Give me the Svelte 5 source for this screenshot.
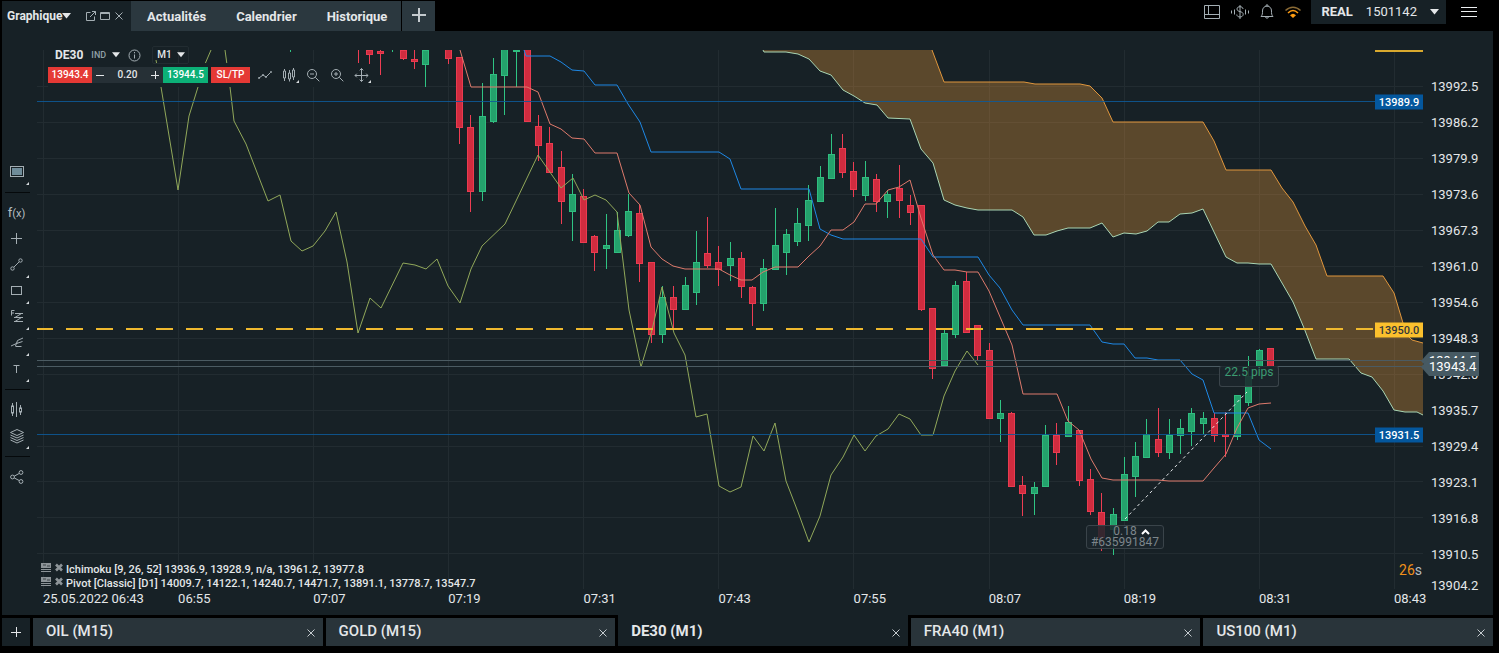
<script lang="ts">
  type Candle = [number, number, number, number, number, "up" | "down"];

  const plot = { x: 37, y: 50, width: 1386, height: 539 };

  let volume = $state("0.20");
  let period = $state("M1");
  let activeChart = $state("DE30 (M1)");

  const pages = ["Actualités", "Calendrier", "Historique"];
  const charts = ["OIL (M15)", "GOLD (M15)", "DE30 (M1)", "FRA40 (M1)", "US100 (M1)"];

  const prices = [
    "13992.5", "13986.2", "13979.9", "13973.6", "13967.3", "13961.0", "13954.6", "13948.3",
    "13942.0", "13935.7", "13929.4", "13923.1", "13916.8", "13910.5", "13904.2",
  ];
  const times = [
    "25.05.2022 06:43", "06:55", "07:07", "07:19", "07:31", "07:43",
    "07:55", "08:07", "08:19", "08:31", "08:43",
  ];
  const indicators = [
    "Ichimoku [9, 26, 52] 13936.9, 13928.9, n/a, 13961.2, 13977.8",
    "Pivot [Classic] [D1] 14009.7, 14122.1, 14240.7, 14471.7, 13891.1, 13778.7, 13547.7",
  ];

  const tools = [
    { name: "screen", menu: true },
    { name: "sep" },
    { name: "fx" },
    { name: "cross" },
    { name: "line", menu: true },
    { name: "rect", menu: true },
    { name: "fibo", menu: true },
    { name: "fork", menu: true },
    { name: "text", menu: true },
    { name: "sep" },
    { name: "bars" },
    { name: "layers", menu: true },
    { name: "sep" },
    { name: "share" },
  ];

  // minute offset from 07:19, high, body top, body bottom, low
  const candles: Candle[] = [
    [-14, 50, 50, 50, 52, "up"],
    [-8, 50, 50, 50, 64, "down"],
    [-7, 50, 50, 55, 64, "down"],
    [-6, 50, 51, 54, 75, "down"],
    [-5, 50, 50, 50, 52, "up"],
    [-4, 50, 50, 59, 60, "down"],
    [-3, 50, 59, 62, 69, "down"],
    [-2, 50, 50, 65, 87, "up"],
    [0, 50, 49, 59, 64, "down"],
    [1, 57, 57, 128, 144, "down"],
    [2, 115, 127, 192, 212, "down"],
    [3, 83, 116, 192, 201, "up"],
    [4, 58, 74, 122, 123, "up"],
    [5, 50, 49, 76, 115, "up"],
    [6, 50, 50, 52, 87, "up"],
    [7, 50, 49, 122, 122, "down"],
    [8, 115, 126, 146, 161, "down"],
    [9, 127, 143, 173, 173, "down"],
    [10, 151, 167, 202, 224, "down"],
    [11, 174, 194, 212, 241, "up"],
    [12, 189, 196, 243, 243, "down"],
    [13, 235, 236, 253, 271, "down"],
    [14, 214, 245, 249, 269, "up"],
    [15, 212, 230, 253, 253, "up"],
    [16, 194, 211, 236, 237, "up"],
    [17, 205, 213, 264, 282, "down"],
    [18, 262, 262, 335, 343, "down"],
    [19, 286, 297, 335, 343, "up"],
    [20, 286, 297, 310, 330, "down"],
    [21, 277, 285, 310, 310, "up"],
    [22, 231, 262, 293, 305, "up"],
    [23, 217, 253, 266, 268, "down"],
    [24, 246, 262, 270, 286, "down"],
    [25, 242, 258, 266, 281, "up"],
    [26, 252, 258, 287, 298, "down"],
    [27, 286, 287, 304, 326, "down"],
    [28, 259, 268, 304, 311, "up"],
    [29, 208, 245, 270, 270, "up"],
    [30, 229, 234, 253, 275, "up"],
    [31, 208, 223, 242, 246, "up"],
    [32, 185, 200, 226, 241, "up"],
    [33, 166, 177, 202, 202, "up"],
    [34, 134, 154, 179, 179, "up"],
    [35, 134, 148, 173, 178, "down"],
    [36, 162, 171, 190, 197, "down"],
    [37, 161, 177, 196, 201, "up"],
    [38, 174, 179, 202, 212, "down"],
    [39, 190, 194, 202, 218, "up"],
    [40, 165, 188, 201, 218, "down"],
    [41, 195, 205, 213, 225, "down"],
    [42, 205, 205, 310, 311, "down"],
    [43, 308, 308, 369, 379, "down"],
    [44, 328, 333, 366, 366, "up"],
    [45, 281, 285, 335, 338, "up"],
    [46, 272, 281, 333, 333, "down"],
    [47, 325, 325, 356, 360, "down"],
    [48, 343, 350, 419, 419, "down"],
    [49, 400, 413, 419, 442, "up"],
    [50, 412, 413, 487, 487, "down"],
    [51, 476, 485, 494, 516, "down"],
    [52, 482, 487, 494, 515, "up"],
    [53, 425, 435, 487, 487, "up"],
    [54, 423, 435, 453, 465, "down"],
    [55, 406, 422, 437, 437, "up"],
    [56, 430, 430, 481, 486, "down"],
    [57, 469, 479, 512, 515, "down"],
    [58, 493, 512, 538, 551, "down"],
    [59, 508, 514, 530, 555, "up"],
    [60, 457, 474, 521, 521, "up"],
    [61, 442, 456, 477, 497, "up"],
    [62, 419, 434, 458, 458, "up"],
    [63, 408, 439, 453, 457, "down"],
    [64, 419, 435, 453, 459, "up"],
    [65, 419, 428, 436, 454, "up"],
    [66, 408, 413, 432, 446, "up"],
    [67, 412, 418, 424, 434, "up"],
    [68, 413, 418, 436, 442, "down"],
    [69, 412, 434, 437, 457, "down"],
    [70, 395, 395, 437, 440, "up"],
    [71, 356, 376, 403, 406, "up"],
    [72, 349, 350, 367, 367, "up"],
    [73, 348, 348, 367, 367, "down"],
  ];

  const spanA =
    "763,50 764,52 786,52 798,54 809,59 820,71 831,75 843,90 854,96 865,103 877,105 888,118 910,119 921,149 933,163 944,200 955,205 967,208 978,210 1012,210 1023,217 1034,235 1046,235 1057,231 1068,228 1090,228 1102,223 1113,237 1124,233 1136,234 1147,231 1158,222 1169,222 1180,214 1192,213 1203,209 1226,257 1237,263 1248,263 1259,264 1271,264 1293,302 1304,328 1316,359 1349,359 1361,373 1372,377 1383,391 1394,410 1405,412 1417,412 1423,415";
  const spanB =
    "1423,343 1412,340 1406,334 1403,323 1394,293 1383,276 1327,276 1316,245 1305,226 1293,202 1282,188 1271,170 1226,170 1214,141 1203,122 1113,122 1102,98 1090,86 1080,84 1035,84 1024,82 944,82 932,50";
  const kijun =
    "524,50 526,56 550,56 561,62 572,70 584,71 595,85 617,85 628,104 640,122 651,152 719,152 730,159 741,189 809,189 820,229 831,235 843,239 921,239 933,257 978,257 989,275 1000,288 1012,310 1023,325 1090,325 1102,342 1113,344 1124,344 1135,358 1147,358 1158,360 1180,360 1192,374 1203,380 1214,413 1248,413 1259,440 1271,449";
  const tenkan =
    "460,50 471,87 527,87 538,92 550,124 561,129 572,138 584,139 595,153 617,153 629,193 640,205 651,247 662,259 673,266 685,269 719,269 730,275 741,280 752,280 763,272 775,267 798,267 809,256 820,246 831,230 843,230 854,222 865,204 876,204 888,190 899,187 910,180 921,218 933,255 944,270 955,270 967,272 978,272 989,291 1012,345 1023,394 1057,394 1068,421 1079,430 1091,459 1102,478 1113,480 1158,480 1169,481 1203,481 1214,468 1226,454 1237,428 1248,408 1259,404 1271,403";
  const chikou =
    "156,60 161,87 178,190 189,116 198,87 205,64 211,50 218,30 225,50 230,87 234,121 246,144 268,201 280,195 291,241 302,251 313,246 325,231 336,212 347,262 358,333 370,298 381,308 403,263 415,265 426,269 437,259 448,286 460,303 471,269 482,246 505,224 538,155 561,188 573,178 584,200 595,195 606,200 617,212 629,310 641,367 652,330 662,287 674,333 685,355 696,417 707,414 719,486 730,492 741,487 753,436 764,451 775,423 786,481 798,512 809,542 820,516 831,475 843,457 854,435 865,451 876,436 888,429 899,414 910,419 921,435 933,435 944,396 955,371 967,351 978,365";

  const gridX = [43, 178, 313, 448, 583, 718, 853, 989, 1124, 1259, 1394];
  const gridY = prices.map((_, i) => 86 + Math.round(i * 35.95));

  const levels = [
    { price: "13989.9", y: 102, kind: "pivot" },
    { price: "13950.0", y: 330, kind: "main" },
    { price: "13931.5", y: 435, kind: "pivot" },
  ];
  const quotes = [
    { price: "13944.5", y: 361 },
    { price: "13943.4", y: 367 },
  ];

  const candleX = (minute: number) => Math.round(447.95 + minute * 11.265);
  const left = (x: number) => `${((x - plot.x) / plot.width) * 100}%`;
  const top = (y: number) => `${((y - plot.y) / plot.height) * 100}%`;
</script>

{#snippet caret()}
  <svg class="caret" width="9" height="6" viewBox="0 0 9 6"><path d="M0 0h9L4.500 5.500z" fill="currentColor" /></svg>
{/snippet}

{#snippet toolIcon(name: string)}
  <svg class="icon" width="18" height="18" viewBox="0 0 18 18">
    {#if name === "screen"}
      <rect x="2.500" y="3.500" width="13" height="10" />
      <rect x="4.500" y="5.500" width="9" height="6" fill="#6f8c99" stroke="#6f8c99" />
    {:else if name === "cross"}
      <path d="M8.500 3v11M3 8.500h11" />
    {:else if name === "line"}
      <circle cx="4.500" cy="12.500" r="1.700" /><circle cx="12.500" cy="4.500" r="1.700" />
      <path d="M5.800 11.200 11.200 5.800" />
    {:else if name === "rect"}
      <rect x="3.500" y="4.500" width="10" height="8" />
    {:else if name === "fibo"}
      <path d="M3.500 7.500V2.500h3M3.500 5h2.500M7 5.500h8M6 9.500h9M6 13.500h9M13.500 5.500 7 9.500M13.500 9.500 7 13.500" />
    {:else if name === "fork"}
      <path d="M3 12 9.500 9M9.500 6.500 7.500 12M7.500 12.500h6M8.500 9.500 14.500 7.500M9.500 6.500 15 4" />
    {:else if name === "text"}
      <path d="M5.500 5.500h6M8.500 5.500V13" />
    {:else if name === "bars"}
      <path d="M4.500 2v3M4.500 12v3M8.500 1v15M12.500 4v3M12.500 11v3" />
      <rect x="3.500" y="5" width="2" height="7" /><rect x="11.500" y="7" width="2" height="4" />
    {:else if name === "layers"}
      <path d="M9 2.500l6.500 3L9 8.500l-6.500-3zM2.500 8 9 11l6.500-3M2.500 10.500l6.500 3 6.500-3M2.500 13 9 16l6.500-3" />
    {:else if name === "share"}
      <circle cx="4.500" cy="9" r="1.900" /><circle cx="13" cy="4.500" r="1.900" /><circle cx="13" cy="13.500" r="1.900" />
      <path d="M6.200 8.200l5.100-2.800M6.200 9.900l5.100 2.700" />
    {/if}
  </svg>
{/snippet}

<div class="terminal">
  <header class="topbar">
    <div class="page-tab">
      <button class="page-name">Graphique{@render caret()}</button>
      <div class="window-buttons">
        <button aria-label="Détacher">
          <svg class="icon" width="10" height="10" viewBox="0 0 10 10"><path d="M4.500 1.500h-4v8h8v-4M6 .500h3.500V4M9.500.500 4 6" /></svg>
        </button>
        <button aria-label="Agrandir">
          <svg class="icon" width="10" height="10" viewBox="0 0 10 10"><path d="M.500 1.500h9v7h-9zM.500 2.500h9" /></svg>
        </button>
        <button aria-label="Fermer">
          <svg class="icon" width="10" height="10" viewBox="0 0 10 10"><path d="M1.500 1.500l7 7M8.500 1.500l-7 7" /></svg>
        </button>
      </div>
    </div>
    <nav class="pages">
      {#each pages as page}
        <a href="#{page}">{page}</a>
      {/each}
    </nav>
    <button class="add-page" aria-label="Ajouter">
      <svg width="14" height="14" viewBox="0 0 14 14"><path d="M7 0v14M0 7h14" /></svg>
    </button>

    <div class="status">
      <button aria-label="Disposition">
        <svg class="icon" width="18" height="16" viewBox="0 0 18 16"><path d="M1.500 1.500h15v13h-15zM5.500 1.500v9M1.500 10.500h15" /></svg>
      </button>
      <button aria-label="Compte">
        <svg class="icon" width="20" height="16" viewBox="0 0 20 16">
          <path d="M13 5c0-1.500-1.300-2.300-3-2.300S7 3.500 7 5s1.300 2.200 3 2.600 3.200 1 3.200 2.700S11.700 13 10 13s-3.200-.900-3.200-2.500M10 1v14M4.500 5.500v5M1.500 6.500v3M15.500 5.500v5M18.500 6.500v3" />
        </svg>
      </button>
      <button aria-label="Alertes">
        <svg class="icon" width="16" height="16" viewBox="0 0 16 16">
          <path d="M2 12.500C3.500 11 3.500 9.500 3.500 7c0-3 1.700-4.800 4.500-4.800s4.500 1.800 4.500 4.800c0 2.500 0 4 1.500 5.500zM7 1.800V1h2v.800M6.500 13c.300 1.600 2.700 1.600 3 0" />
        </svg>
      </button>
      <button aria-label="Connexion">
        <svg width="18" height="14" viewBox="0 0 18 14" fill="none" stroke-width="1.500">
          <path d="M1.500 5.500C6 1 12 1 16.500 5.500" stroke="#8a6a35" />
          <path d="M4 8c3.200-3.200 6.800-3.200 10 0" stroke="#ff9c12" />
          <path d="M6 10.200c2-2 4-2 6 0L9 13z" fill="#ff9c12" />
        </svg>
      </button>
      <button class="account"><b>REAL</b><span>1501142</span>{@render caret()}</button>
      <button class="menu" aria-label="Menu">
        <svg width="16" height="10" viewBox="0 0 16 10"><path d="M0 .500h16M0 4.500h16M0 9.500h16" stroke="#eceff1" /></svg>
      </button>
    </div>
  </header>

  <main class="panel">
    <aside class="tools">
      {#each tools as tool}
        {#if tool.name === "sep"}
          <hr />
        {:else}
          <button aria-label={tool.name} class:has-menu={tool.menu}>
            {#if tool.name === "fx"}
              <span class="fx">f<small>(x)</small></span>
            {:else}
              {@render toolIcon(tool.name)}
            {/if}
          </button>
        {/if}
      {/each}
    </aside>

    <section class="plot">
      <svg
        class="canvas"
        viewBox="{plot.x} {plot.y} {plot.width} {plot.height}"
        preserveAspectRatio="none"
      >
        <g class="grid">
          {#each gridX as x}
            <rect {x} y="50" width="1" height="539" />
          {/each}
          {#each gridY as y}
            <rect x="37" {y} width="1386" height="1" />
          {/each}
        </g>

        {#each candles as [minute, high, open, close, low, side]}
          {@const x = candleX(minute)}
          <g class={side}>
            <rect class="wick" {x} y={high} width="1" height={low - high} />
            {#if close > open}
              <rect class="body" x={x - 2.5} y={open + 0.5} width="6" height={Math.max(close - open - 1, 1)} />
            {/if}
          </g>
        {/each}

        <polygon class="cloud" points="{spanA} {spanB}" />
        <polyline class="span-b" points={spanB} />
        <polyline class="span-a" points={spanA} />
        <polyline class="chikou" points={chikou} />
        <polyline class="kijun" points={kijun} />
        <polyline class="tenkan" points={tenkan} />

        <g class="quote-lines">
          <rect x="37" y="360" width="1386" height="1" />
          <rect x="37" y="366" width="1386" height="1" />
        </g>
        <rect class="pivot-line" x="37" y="101" width="1338" height="1" />
        <rect class="pivot-line" x="37" y="434" width="1338" height="1" />
        <path class="main-line" d="M36 329h1338" />
        <path class="main-edge" d="M1375 51h48" />
        <path class="trade-line" d="M1125 519l122-127" />
      </svg>

      {#each levels as level}
        <span class="level {level.kind}" style:top={top(level.y)}>{level.price}</span>
      {/each}

      <div class="trade profit" style:left={left(1249)} style:top={top(366)}>22.5 pips</div>
      <div class="trade order" style:left={left(1125)} style:top={top(525)}>
        <span class="lots">0.18 <svg width="9" height="6" viewBox="0 0 9 6"><path d="M1 5l3.500-3.500L8 5" /></svg></span>
        <span>#635991847</span>
      </div>

      <div class="controls">
        <div class="instrument">
          <b>DE30</b>
          <small>IND</small>
          <button aria-label="Instrument">{@render caret()}</button>
          <button class="info" aria-label="Informations">
            <svg class="icon" width="13" height="13" viewBox="0 0 13 13"><circle cx="6.500" cy="6.500" r="5.500" /><path d="M6.500 5.500v4M6.500 3v1.300" /></svg>
          </button>
          <label class="period">
            <select aria-label="Période" bind:value={period}>
              <option>M1</option>
              <option>M5</option>
              <option>M15</option>
            </select>
            {@render caret()}
          </label>
        </div>
        <div class="ticket">
          <button class="sell">13943.4</button>
          <button class="step" aria-label="Moins"><svg width="8" height="8" viewBox="0 0 8 8"><path d="M0 4.500h8" /></svg></button>
          <input aria-label="Volume" bind:value={volume} />
          <button class="step" aria-label="Plus"><svg width="8" height="8" viewBox="0 0 8 8"><path d="M0 4.500h8M4.500 0v8" /></svg></button>
          <button class="buy">13944.5</button>
          <button class="sltp">SL/TP</button>
          <div class="views">
            <button aria-label="Type de graphique">
              <svg class="icon" width="16" height="16" viewBox="0 0 16 16"><path d="M2 11l4-3 3 2 4.500-4.500" /><circle cx="2" cy="11" r=".6" /><circle cx="6" cy="8" r=".6" /><circle cx="9" cy="10" r=".6" /><circle cx="14" cy="5" r=".6" /></svg>
            </button>
            <button class="has-menu" aria-label="Chandeliers">
              <svg class="icon" width="16" height="16" viewBox="0 0 16 16"><path d="M3.500 2v2M3.500 11v3M8.500 3v3M8.500 12v2.500M12.500 1v2M12.500 10v3M2.500 4h2v7h-2zM7.500 6h2v6h-2zM11.500 3h2v7h-2z" /></svg>
            </button>
            <button aria-label="Zoom arrière">
              <svg class="icon" width="16" height="16" viewBox="0 0 16 16"><circle cx="7" cy="7" r="4.500" /><path d="M10.300 10.300l4 4M5 7h4" /></svg>
            </button>
            <button aria-label="Zoom avant">
              <svg class="icon" width="16" height="16" viewBox="0 0 16 16"><circle cx="7" cy="7" r="4.500" /><path d="M10.300 10.300l4 4M5 7h4M7 5v4" /></svg>
            </button>
            <button class="has-menu" aria-label="Déplacer">
              <svg class="icon" width="16" height="16" viewBox="0 0 16 16"><path d="M8.500 1.500v13M2 8.500h13M6.700 3.300l1.800-1.800 1.800 1.800M6.700 12.700l1.800 1.800 1.800-1.800M3.800 6.700 2 8.500l1.800 1.800M13.200 6.700 15 8.500l-1.800 1.800" /></svg>
            </button>
          </div>
        </div>
      </div>

      <ul class="indicators">
        {#each indicators as text}
          <li>
            <svg width="23" height="10" viewBox="0 0 23 10">
              <path d="M0 0h10v5H0zM0 6h10v1H0zM0 8h10v1H0z" fill="#8d9498" />
              <path d="M2 2h3M6 3h3" stroke="#3a4347" />
              <path d="M15 1.500l6 6M21 1.500l-6 6" stroke="#8d9498" stroke-width="2.600" />
            </svg>
            {text}
          </li>
        {/each}
      </ul>
      <p class="countdown"><b>26</b>s</p>
    </section>

    <div class="price-axis">
      <ol>
        {#each prices as price}
          <li>{price}</li>
        {/each}
      </ol>
      {#each quotes as quote}
        <span class="quote" style:top="{quote.y - plot.y}px">{quote.price}</span>
      {/each}
    </div>

    <ol class="time-axis">
      {#each times as time}
        <li>{time}</li>
      {/each}
    </ol>
  </main>

  <footer class="chart-tabs">
    <button class="add-chart" aria-label="Nouveau graphique">
      <svg width="10" height="10" viewBox="0 0 10 10"><path d="M5.500 0v10M0 5.500h10" /></svg>
    </button>
    {#each charts as chart}
      <div class="chart-tab" class:active={chart === activeChart}>
        <button class="chart-name" onclick={() => (activeChart = chart)}>{chart}</button>
        <button class="close" aria-label="Fermer {chart}">
          <svg width="8" height="8" viewBox="0 0 8 8"><path d="M.500.500l7 7M7.500.500l-7 7" /></svg>
        </button>
      </div>
    {/each}
  </footer>
</div>

<style>
  :global(body) {
    margin: 0;
    background: #000;
  }

  .terminal {
    display: flex;
    flex-direction: column;
    box-sizing: border-box;
    min-height: 100vh;
    padding: 0 6px 7px 2px;
    background: #000;
    color: #e4e7e9;
    font-family: Roboto, "Liberation Sans", sans-serif;
    font-size: 13px;
    line-height: 16px;
  }

  button,
  input,
  select {
    margin: 0;
    padding: 0;
    border: 0;
    background: none;
    color: inherit;
    font: inherit;
    cursor: pointer;
  }

  svg {
    display: block;
    flex: none;
  }

  ol,
  ul,
  p {
    margin: 0;
    padding: 0;
    list-style: none;
  }

  .icon {
    fill: none;
    stroke: #a4aeb3;
    stroke-width: 1;
  }

  .topbar {
    display: flex;
    height: 31px;
  }

  .page-tab {
    display: flex;
    align-items: center;
    box-sizing: border-box;
    width: 129px;
    margin-top: 1px;
    padding: 0 7px 0 5px;
    background: #172126;
  }

  .page-name {
    display: flex;
    align-items: center;
    font-size: 12px;
    font-weight: 700;
  }

  .window-buttons {
    display: flex;
    gap: 4px;
    margin-left: auto;
  }

  .pages {
    display: flex;
    align-items: center;
    gap: 30px;
    margin-top: 1px;
    padding: 1px 14px 0 16px;
    background: #2b383f;
  }

  .pages a {
    color: #e4e7e9;
    font-weight: 700;
    text-decoration: none;
  }

  .add-page {
    display: flex;
    align-items: center;
    justify-content: center;
    width: 33px;
    margin: 1px 0 0 1px;
    padding-bottom: 2px;
    background: #2b383f;
  }

  .add-page svg,
  .add-chart svg,
  .step svg {
    stroke: #e4e7e9;
    stroke-width: 1;
  }

  .add-page svg {
    stroke: #c4cace;
    stroke-width: 2;
  }

  .status {
    display: flex;
    align-items: center;
    gap: 9px;
    height: 24px;
    margin-left: auto;
    padding-right: 16px;
  }

  .account {
    display: flex;
    align-items: center;
    gap: 13px;
    height: 24px;
    padding: 0 7px 0 10px;
    background: #172126;
  }

  .menu {
    margin-left: 6px;
  }

  .panel {
    display: grid;
    flex: 1;
    grid-template-columns: 35px minmax(0, 1fr) 70px;
    grid-template-rows: 19px minmax(539px, 1fr) 26px;
    background: #172126;
  }

  .tools {
    display: flex;
    grid-row: 1 / 4;
    flex-direction: column;
    padding-top: 128px;
  }

  .tools button {
    display: flex;
    position: relative;
    align-items: center;
    justify-content: center;
    height: 26px;
    padding-right: 6px;
  }

  .tools hr {
    width: 25px;
    height: 1px;
    margin: 7px 3px;
    border: 0;
    background: #05090b;
  }

  .has-menu {
    position: relative;
  }

  .has-menu::after {
    position: absolute;
    right: 8px;
    bottom: 0;
    border: solid transparent;
    border-width: 0 0 3px 3px;
    border-bottom-color: #d5dadc;
    content: "";
  }

  .fx {
    color: #b4bdc1;
    font-size: 13px;
  }

  .fx small {
    font-size: 11px;
  }

  .plot {
    position: relative;
    grid-row: 2;
    grid-column: 2;
  }

  .canvas {
    position: absolute;
    width: 100%;
    height: 100%;
  }

  .canvas polyline,
  .canvas path {
    fill: none;
    stroke-width: 1;
    vector-effect: non-scaling-stroke;
  }

  .grid {
    fill: #222c31;
  }

  .quote-lines {
    fill: #4b5b62;
  }

  .up .wick {
    fill: #2fc483;
  }

  .up .body {
    fill: #24a26c;
    stroke: #30bd7f;
  }

  .down .wick {
    fill: #ee3d53;
  }

  .down .body {
    fill: #d02c3f;
    stroke: #ea3b50;
  }

  .cloud {
    fill: #ed9d3a;
    fill-opacity: 0.32;
  }

  .span-a {
    stroke: #a9d6b4;
  }

  .span-b {
    stroke: #e0963c;
  }

  .kijun {
    stroke: #1e88e5;
  }

  .tenkan {
    stroke: #de7a6c;
  }

  .chikou {
    stroke: #91a85a;
  }

  .pivot-line {
    fill: #0d5a9b;
    fill-opacity: 0.85;
  }

  .canvas .main-line {
    stroke: #efb92f;
    stroke-width: 2;
    stroke-dasharray: 17 13;
  }

  .canvas .main-edge {
    stroke: #d9a92e;
    stroke-width: 2;
  }

  .canvas .trade-line {
    stroke: #e4e7e9;
    stroke-dasharray: 3 3;
  }

  .level {
    position: absolute;
    right: 0;
    width: 48px;
    height: 15px;
    background: #04579d;
    color: #fff;
    font-size: 11px;
    font-weight: 500;
    line-height: 15px;
    text-align: center;
    transform: translateY(-50%);
  }

  .level.main {
    background: #fbc02d;
    color: #33373a;
  }

  .trade {
    position: absolute;
    box-sizing: border-box;
    border: 1px solid #3a444a;
    border-radius: 3px;
    background: rgba(28, 38, 44, 0.86);
    font-size: 12px;
    line-height: 11px;
    text-align: center;
    white-space: nowrap;
    transform: translateX(-50%);
  }

  .profit {
    width: 60px;
    height: 21px;
    border-top-color: transparent;
    color: #3c9c72;
  }

  .order {
    display: flex;
    flex-direction: column;
    align-items: center;
    width: 78px;
    height: 24px;
    color: #7d868b;
  }

  .lots {
    display: flex;
    align-items: center;
    gap: 4px;
    padding-left: 13px;
  }

  .order path {
    fill: none;
    stroke: #fff;
    stroke-width: 2;
  }

  .controls {
    position: absolute;
    top: -5px;
    left: 11px;
  }

  .instrument {
    display: flex;
    align-items: center;
    height: 20px;
    padding-left: 7px;
  }

  .instrument b {
    margin-right: 8px;
    font-size: 12px;
  }

  .instrument small {
    margin-right: 6px;
    color: #90a0a8;
    font-size: 9px;
    font-weight: 500;
  }

  .instrument .caret {
    width: 8px;
  }

  .info {
    margin: 0 11px 0 8px;
  }

  .period {
    display: flex;
    align-items: center;
    box-sizing: border-box;
    width: 37px;
    height: 18px;
    padding: 0 4px;
    border: 1px solid #222c31;
    border-radius: 2px;
  }

  .period select {
    flex: 1;
    width: 20px;
    appearance: none;
    font-size: 10px;
    font-weight: 500;
  }

  .ticket {
    display: flex;
    align-items: center;
    height: 24px;
    margin-top: -2px;
    background: #172126;
    font-size: 10px;
    font-weight: 500;
  }

  .ticket > button,
  .ticket input {
    height: 16px;
    line-height: 16px;
    text-align: center;
  }

  .sell {
    width: 44px;
    background: #e53935;
    color: #fff;
  }

  .buy {
    width: 45px;
    background: #0cb077;
    color: #fff;
  }

  .sltp {
    width: 39px;
    margin-left: 3px;
    background: #e53935;
    color: #fff;
  }

  .step {
    display: flex;
    align-items: center;
    justify-content: center;
    width: 16px;
    background: #263036;
  }

  .ticket input {
    width: 39px;
    background: #263036;
  }

  .views {
    display: flex;
    gap: 8px;
    padding-left: 7px;
  }

  .views .has-menu::after {
    right: -2px;
  }

  .indicators {
    position: absolute;
    bottom: -2px;
    left: 4px;
    font-size: 11px;
    font-weight: 500;
    line-height: 14px;
  }

  .indicators li {
    display: flex;
    gap: 2px;
    white-space: nowrap;
  }

  .countdown {
    position: absolute;
    right: 1px;
    bottom: 10px;
    color: #b4bdc1;
    font-size: 14px;
    line-height: 18px;
  }

  .countdown b {
    color: #f0901a;
    font-weight: 400;
  }

  .price-axis {
    position: relative;
    grid-row: 2 / 4;
    grid-column: 3;
  }

  .price-axis ol {
    display: flex;
    flex-direction: column;
    box-sizing: border-box;
    height: 100%;
    padding: 19px 0 16px 8px;
  }

  .price-axis li {
    display: flex;
    flex: 1;
    align-items: center;
  }

  .price-axis li:last-child {
    flex: none;
    height: 26px;
  }

  .quote {
    position: absolute;
    right: 14px;
    width: 50px;
    padding-left: 8px;
    background: #475a63;
    color: #fff;
    line-height: 18px;
    clip-path: polygon(0 50%, 8px 0, 100% 0, 100% 100%, 8px 100%);
    transform: translateY(-50%);
  }

  .time-axis {
    display: grid;
    grid-row: 3;
    grid-column: 2;
    grid-template-columns: repeat(10, 1fr) 29px;
    padding: 2px 0 0 6px;
  }

  .time-axis li {
    width: 0;
    white-space: nowrap;
  }

  .chart-tabs {
    display: flex;
    gap: 3px;
    padding-top: 3px;
  }

  .add-chart {
    display: flex;
    align-items: center;
    justify-content: center;
    width: 28px;
    height: 28px;
    background: #172126;
  }

  .chart-tab {
    display: flex;
    flex: 1;
    align-items: center;
    height: 28px;
    padding: 0 8px 0 13px;
    background: #29343a;
  }

  .chart-tab.active {
    margin-top: -3px;
    padding-top: 3px;
    background: #172126;
  }

  .chart-name {
    flex: 1;
    padding-bottom: 2px;
    font-size: 15px;
    font-weight: 500;
    text-align: left;
  }

  .active .chart-name {
    font-weight: 700;
  }

  .close svg {
    margin-top: 1px;
    stroke: #c4cace;
  }
</style>
